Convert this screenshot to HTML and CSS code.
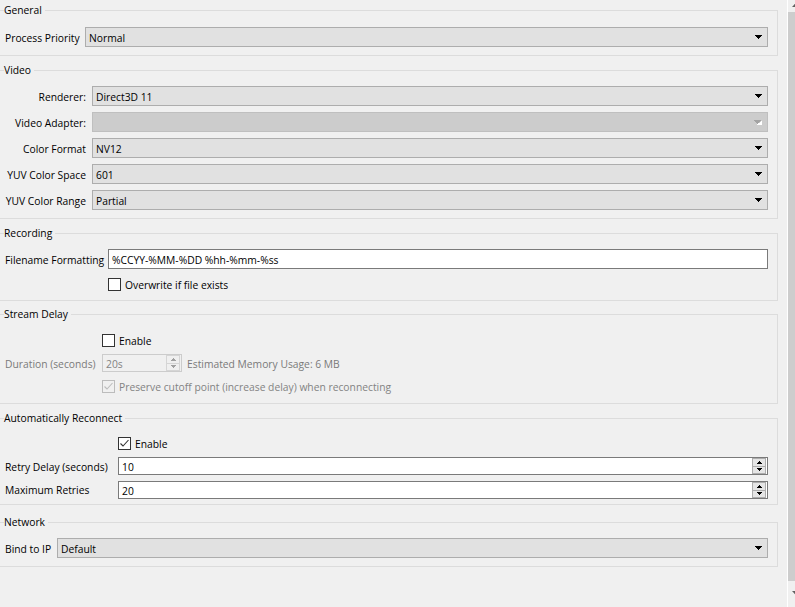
FILE: index.html
```html
<!DOCTYPE html>
<html>
<head>
<meta charset="utf-8">
<title>Settings - Advanced</title>
<link rel="stylesheet" href="styles.css">
</head>
<body>
<div class="window">
  <main class="content">

    <section class="group g-general">
      <div class="title"><span>General</span></div>
      <div class="rows">
        <div class="label">Process Priority</div>
        <div class="combo"><span class="val">Normal</span><svg class="arrow" width="7" height="4" viewBox="0 0 7 4"><polygon points="0,0 7,0 3.5,4"/></svg></div>
      </div>
    </section>

    <section class="group g-video">
      <div class="title"><span>Video</span></div>
      <div class="rows">
        <div class="label right">Renderer:</div>
        <div class="combo"><span class="val">Direct3D 11</span><svg class="arrow" width="7" height="4" viewBox="0 0 7 4"><polygon points="0,0 7,0 3.5,4"/></svg></div>
        <div class="label right">Video Adapter:</div>
        <div class="combo disabled"><span class="val"></span><svg class="arrow" width="8" height="5" viewBox="0 0 8 5"><polygon class="hl" points="2,5 8,5 8,1"/><polygon points="0,0 7,0 3.5,4"/></svg></div>
        <div class="label right">Color Format</div>
        <div class="combo"><span class="val">NV12</span><svg class="arrow" width="7" height="4" viewBox="0 0 7 4"><polygon points="0,0 7,0 3.5,4"/></svg></div>
        <div class="label right">YUV Color Space</div>
        <div class="combo"><span class="val">601</span><svg class="arrow" width="7" height="4" viewBox="0 0 7 4"><polygon points="0,0 7,0 3.5,4"/></svg></div>
        <div class="label right">YUV Color Range</div>
        <div class="combo"><span class="val">Partial</span><svg class="arrow" width="7" height="4" viewBox="0 0 7 4"><polygon points="0,0 7,0 3.5,4"/></svg></div>
      </div>
    </section>

    <section class="group g-recording">
      <div class="title"><span>Recording</span></div>
      <div class="rows">
        <div class="label">Filename Formatting</div>
        <div class="input"><span class="val">%CCYY-%MM-%DD %hh-%mm-%ss</span></div>
        <div class="empty"></div>
        <div class="check-row h18"><span class="box"></span><span class="txt">Overwrite if file exists</span></div>
      </div>
    </section>

    <section class="group g-stream">
      <div class="title"><span>Stream Delay</span></div>
      <div class="rows">
        <div class="empty"></div>
        <div class="check-row"><span class="box"></span><span class="txt">Enable</span></div>
        <div class="label muted">Duration (seconds)</div>
        <div class="spin-line">
          <div class="spin small disabled">
            <span class="val">20s</span>
            <div class="spin-btns">
              <div class="sb"><svg width="5" height="3" viewBox="0 0 5 3"><polygon points="2.5,0 5,3 0,3"/></svg></div>
              <div class="sb"><svg width="5" height="3" viewBox="0 0 5 3"><polygon points="0,0 5,0 2.5,3"/></svg></div>
            </div>
          </div>
          <span class="muted txt">Estimated Memory Usage: 6 MB</span>
        </div>
        <div class="empty"></div>
        <div class="check-row disabled"><span class="box"><svg width="11" height="11" viewBox="0 0 11 11"><polyline points="1.5,5.5 4,8 9.5,2"/></svg></span><span class="txt">Preserve cutoff point (increase delay) when reconnecting</span></div>
      </div>
    </section>

    <section class="group g-auto">
      <div class="title"><span>Automatically Reconnect</span></div>
      <div class="rows">
        <div class="empty"></div>
        <div class="check-row"><span class="box"><svg width="11" height="11" viewBox="0 0 11 11"><polyline points="1.5,5.5 4,8 9.5,2"/></svg></span><span class="txt">Enable</span></div>
        <div class="label">Retry Delay (seconds)</div>
        <div class="spin">
          <span class="val">10</span>
          <div class="spin-btns">
            <div class="sb"><svg width="5" height="3" viewBox="0 0 5 3"><polygon points="2.5,0 5,3 0,3"/></svg></div>
            <div class="sb"><svg width="5" height="3" viewBox="0 0 5 3"><polygon points="0,0 5,0 2.5,3"/></svg></div>
          </div>
        </div>
        <div class="label end">Maximum Retries</div>
        <div class="spin end">
          <span class="val">20</span>
          <div class="spin-btns">
            <div class="sb"><svg width="5" height="3" viewBox="0 0 5 3"><polygon points="2.5,0 5,3 0,3"/></svg></div>
            <div class="sb"><svg width="5" height="3" viewBox="0 0 5 3"><polygon points="0,0 5,0 2.5,3"/></svg></div>
          </div>
        </div>
      </div>
    </section>

    <section class="group g-network">
      <div class="title"><span>Network</span></div>
      <div class="rows">
        <div class="label">Bind to IP</div>
        <div class="combo"><span class="val">Default</span><svg class="arrow" width="7" height="4" viewBox="0 0 7 4"><polygon points="0,0 7,0 3.5,4"/></svg></div>
      </div>
    </section>

  </main>
  <aside class="scrollbar">
    <div class="sbar-inner">
      <div class="sbar-top"><svg width="9" height="5" viewBox="0 0 9 5"><polygon points="4.5,0 9,5 0,5"/></svg></div>
      <div class="sbar-thumb"></div>
      <div class="sbar-track"></div>
      <div class="sbar-bottom"><svg width="9" height="5" viewBox="0 0 9 5"><polygon points="0,0 9,0 4.5,5"/></svg></div>
    </div>
  </aside>
</div>
</body>
</html>
```

FILE: styles.css
```css
* { box-sizing: border-box; }

html, body {
  margin: 0;
  padding: 0;
}

body {
  width: 795px;
  height: 607px;
  overflow: hidden;
  background: #f0f0f0;
  font-family: "Segoe UI", "Open Sans", "Noto Sans", sans-serif;
  font-size: 10.3px;
  color: #000;
}

.window {
  display: flex;
  height: 607px;
}

.content {
  width: 787px;
  flex: none;
  padding-top: 10px;
}

/* group boxes */
.group {
  width: 778px;
  border: 1px solid #dcdcdc;
  border-left: none;
  padding: 0 9px 8px 5px;
}

.title {
  height: 16px;
  line-height: 16px;
  margin-top: -9px;
  margin-left: -1px;
  white-space: nowrap;
}

.title span {
  background: #f0f0f0;
  padding-right: 3px;
}

.rows {
  display: grid;
  column-gap: 6px;
  row-gap: 6px;
  margin-top: 8px;
  grid-auto-rows: 20px;
  align-items: center;
}

.g-general { margin-top: 0; }
.g-general .rows { grid-template-columns: 74px 1fr; margin-top: 9px; }

.g-video { margin-top: 14px; }
.g-video .rows { grid-template-columns: 81px 1fr; }

.g-recording { margin-top: 14px; padding-bottom: 7px; }
.g-recording .rows { grid-template-columns: 97px 1fr; grid-template-rows: 20px 18px; }

.g-stream { margin-top: 13px; padding-bottom: 7px; }
.g-stream .rows { grid-template-columns: 91px 1fr; grid-template-rows: 20px 18px 20px; row-gap: 4px; }

.g-auto { margin-top: 14px; padding-bottom: 5px; }
.g-auto .rows { grid-template-columns: 107px 1fr; grid-template-rows: 20px 18px 20px; row-gap: 4px; margin-top: 7px; }
.g-auto .rows > .end { align-self: end; }
.g-auto .rows > .label.end { margin-bottom: 1px; }

.g-network { margin-top: 17px; }
.g-network .rows { grid-template-columns: 46px 1fr; }

.label {
  white-space: nowrap;
  line-height: 16px;
  padding-top: 1px;
}

.label.right {
  text-align: right;
}

.txt { padding-top: 1px; }

.muted { color: #7a7a7a; }

/* combo box */
.combo {
  height: 20px;
  border: 1px solid #adadad;
  background: #e1e1e1;
  display: flex;
  align-items: center;
  padding: 0 5px 0 3px;
}

.combo .val {
  flex: 1;
  white-space: nowrap;
  padding-top: 1px;
}

.combo .arrow {
  flex: none;
  display: block;
  fill: #000;
  shape-rendering: crispEdges;
}

.combo.disabled {
  background: #cccccc;
  border-color: #bfbfbf;
}

.combo.disabled .arrow { fill: #a3a3a3; }
.combo.disabled .arrow .hl { fill: #ffffff; }

/* line edit */
.input {
  height: 20px;
  border: 1px solid #7a7a7a;
  background: #fff;
  display: flex;
  align-items: center;
  padding: 1px 3px 0;
}

/* spin box */
.spin {
  height: 18px;
  border: 1px solid #7a7a7a;
  background: #fff;
  display: flex;
  align-items: center;
  padding-left: 3px;
}

.spin .val { flex: 1; padding-top: 1px; }

.spin-btns {
  width: 14px;
  height: 16px;
  margin-right: 1px;
  display: flex;
  flex-direction: column;
}

.sb {
  flex: 1;
  border: 1px solid #adadad;
  background: #e5e5e5;
  display: flex;
  align-items: center;
  justify-content: center;
}

.sb + .sb { border-top: none; }

.sb svg {
  display: block;
  fill: #000;
  shape-rendering: crispEdges;
}

.spin-line {
  display: flex;
  align-items: center;
  gap: 5px;
}

.spin.small { width: 80px; flex: none; }

.spin.disabled {
  border-color: #cccccc;
  background: #f0f0f0;
  color: #838383;
}

.spin.disabled .sb {
  border-color: #d5d5d5;
  background: #f0f0f0;
}

.spin.disabled .sb svg { fill: #a0a0a0; }

/* check boxes */
.check-row {
  display: flex;
  align-items: center;
  gap: 4px;
  white-space: nowrap;
}

.check-row .box {
  width: 13px;
  height: 13px;
  flex: none;
  border: 1px solid #333;
  background: #fff;
  display: flex;
  align-items: center;
  justify-content: center;
}

.check-row .box svg {
  display: block;
  fill: none;
  stroke: #333;
  stroke-width: 1.1;
}

.check-row.disabled { color: #838383; }

.check-row.disabled .box {
  border-color: #bcbcbc;
  background: #f0f0f0;
}

.check-row.disabled .box svg { stroke: #bcbcbc; }

/* scrollbar (partially visible) */
.scrollbar {
  width: 8px;
  flex: none;
  border-left: 1px solid #ffffff;
  overflow: hidden;
}

.sbar-inner {
  width: 17px;
  height: 607px;
  display: flex;
  flex-direction: column;
  background: #f0f0f0;
}

.sbar-top {
  height: 12px;
  display: flex;
  justify-content: center;
  padding-top: 2px;
}

.sbar-top svg, .sbar-bottom svg { display: block; fill: #606060; }

.sbar-thumb {
  height: 569px;
  background: #cdcdcd;
}

.sbar-track { flex: 1; }

.sbar-bottom {
  height: 17px;
  display: flex;
  justify-content: center;
  padding-top: 1px;
}
```
